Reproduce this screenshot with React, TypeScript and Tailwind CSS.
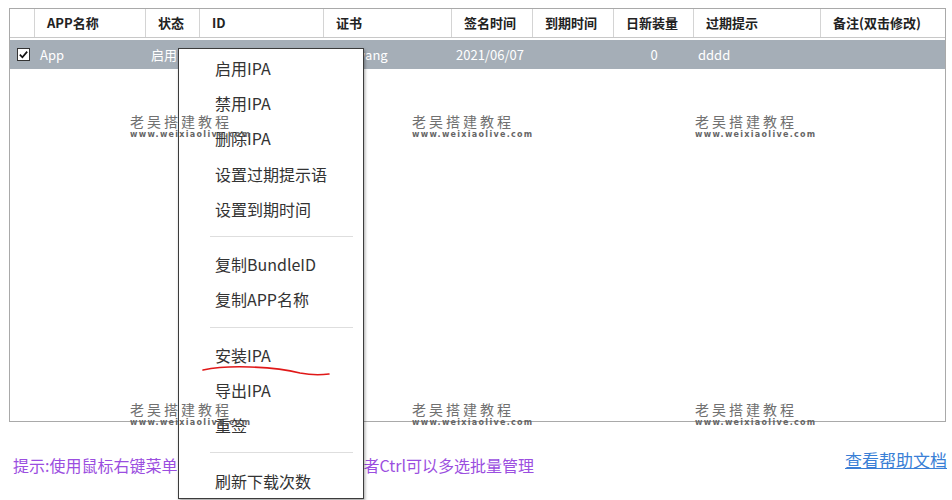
import React from "react";

const cols = [
  { title: "", w: "w-[25px]" },
  { title: "APP名称", w: "w-[111px]" },
  { title: "状态", w: "w-[54px]" },
  { title: "ID", w: "w-[124px]" },
  { title: "证书", w: "w-[128px]" },
  { title: "签名时间", w: "w-[81px]" },
  { title: "到期时间", w: "w-[81px]" },
  { title: "日新装量", w: "w-[80px]" },
  { title: "过期提示", w: "w-[127px]" },
  { title: "备注(双击修改)", w: "w-[124px]" },
];

const menu: (string | null)[] = [
  "启用IPA",
  "禁用IPA",
  "删除IPA",
  "设置过期提示语",
  "设置到期时间",
  null,
  "复制BundleID",
  "复制APP名称",
  null,
  "安装IPA",
  "导出IPA",
  "重签",
  null,
  "刷新下载次数",
];

const marks = [
  { x: "left-[130px]", y: "top-[113px]" },
  { x: "left-[412px]", y: "top-[113px]" },
  { x: "left-[695px]", y: "top-[113px]" },
  { x: "left-[130px]", y: "top-[401px]" },
  { x: "left-[412px]", y: "top-[401px]" },
  { x: "left-[695px]", y: "top-[401px]" },
];

function Watermark({ x, y }: { x: string; y: string }) {
  return (
    <div className={`absolute ${x} ${y} z-20 pointer-events-none flex flex-col items-start`}>
      <span className="text-[14px] leading-[17px] tracking-[3px] text-[#707070]">老吴搭建教程</span>
      <span className="text-[8px] leading-[9px] tracking-[1.3px] font-semibold text-[#666] font-['DejaVu_Sans',sans-serif]">
        www.weixiaolive.com
      </span>
    </div>
  );
}

export default function App() {
  return (
    <div className="relative w-[952px] h-[500px] bg-white overflow-hidden font-['Noto_Sans_CJK_SC','Noto_Sans',sans-serif]">
      {/* table */}
      <div className="ml-[9px] mt-[8px] w-[937px] h-[414px] border border-[#a9a9a9] flex flex-col">
        <div className="flex h-[29px] border-b border-[#c8c8c8]">
          {cols.map((c, i) => (
            <div
              key={i}
              className={`${c.w} shrink-0 h-full flex items-center pl-[12px] text-[13px] font-bold text-[#222] ${
                i < cols.length - 1 ? "border-r border-[#d4d4d4]" : ""
              }`}
            >
              {c.title}
            </div>
          ))}
        </div>
        <div className="mt-[2px] h-[29px] bg-[#a5aeb7] flex items-center text-[13px] text-white">
          <div className="w-[25px] shrink-0 flex justify-center pl-[2px]">
            <span className="w-[13px] h-[13px] bg-white border border-[#333] flex items-center justify-center">
              <svg viewBox="0 0 12 12" className="w-[11px] h-[11px]">
                <path d="M2 6.2 L4.8 9 L10 2.8" fill="none" stroke="#111" strokeWidth="1.9" />
              </svg>
            </span>
          </div>
          <div className="w-[111px] shrink-0 pl-[5px]">App</div>
          <div className="w-[54px] shrink-0 pl-[5px]">启用</div>
          <div className="w-[124px] shrink-0 pl-[5px]">com.app.demo</div>
          <div className="w-[128px] shrink-0 pl-[12px]">laowang</div>
          <div className="w-[81px] shrink-0 pl-[4px]">2021/06/07</div>
          <div className="w-[81px] shrink-0"></div>
          <div className="w-[80px] shrink-0 text-center">0</div>
          <div className="w-[127px] shrink-0 pl-[4px]">dddd</div>
          <div className="w-[124px] shrink-0"></div>
        </div>
      </div>

      {/* footer */}
      <div className="flex items-center justify-between pl-[13px] mt-[31px]">
        <span className="text-[16px] text-[#9b4ee0]">
          提示:使用鼠标右键菜单进行操作，按住 Shift 键或者Ctrl可以多选批量管理
        </span>
        <a href="#" className="text-[17px] text-[#3a7fd6] underline mr-[5px] -mt-[11px]">
          查看帮助文档
        </a>
      </div>

      {/* context menu */}
      <div className="absolute left-[178px] top-[48px] w-[186px] bg-white border border-[#3c3c3c] shadow-[1px_2px_3px_rgba(0,0,0,0.35)] pt-[1px] z-10">
        {menu.map((m, i) =>
          m === null ? (
            <div key={i} className="h-[20px] flex items-center pl-[31px] pr-[10px]">
              <div className="h-px w-full bg-[#dedede]" />
            </div>
          ) : (
            <div key={i} className="h-[35.3px] flex items-center pl-[36px] text-[16px] text-[#333]">
              {m}
            </div>
          )
        )}
      </div>

      {/* red pen stroke */}
      <svg className="absolute left-0 top-0 z-30 pointer-events-none" width="952" height="500">
        <path d="M203 370 Q 222 366 250 367 Q 280 368 300 373 Q 315 376 329 374" fill="none" stroke="#e01818" strokeWidth="1.6" strokeLinecap="round" />
      </svg>

      {marks.map((m, i) => (
        <Watermark key={i} x={m.x} y={m.y} />
      ))}
    </div>
  );
}
